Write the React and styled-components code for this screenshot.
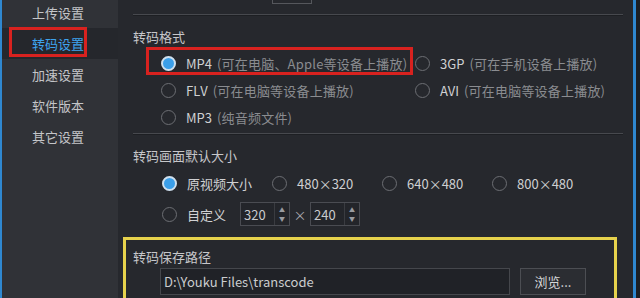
import React from 'react'
import styled, { createGlobalStyle } from 'styled-components'

const Global = createGlobalStyle`
html, body { margin: 0; padding: 0; background: #26282d; }
body { font-family: "Noto Sans CJK SC", "Noto Sans", sans-serif; }
`

const Frame = styled.div`
width: 640px;
height: 298px;
overflow: hidden;
display: flex;
background: #26282d;
`

const Edge = styled.div`
width: ${p => p.w}px;
flex: none;
background: ${p => p.color};
`

const Side = styled.div`
width: 116px;
flex: none;
background: #303237;
display: flex;
flex-direction: column;
margin-top: -3px;
`

const NavItem = styled.div`
position: relative;
height: 31px;
flex: none;
display: flex;
align-items: center;
padding-left: 30px;
font-size: 13px;
color: ${p => (p.active ? '#3ea3ee' : '#c4c5c8')};
background: ${p => (p.active ? '#25272c' : 'transparent')};
${p => p.active && `
&::after{
    content:'';
    position:absolute;
    left:7px; right:31px; top:-1px; bottom:2px;
    border:3px solid #d8221f;
}
`}
`

const Main = styled.div`
flex: 1;
padding: 0 10px 0 15px;
display: flex;
flex-direction: column;
>*{
    flex: none;
}
`

const TopStub = styled.div`
height: 14px;
padding-left: 139px;
`

const StubBox = styled.div`
width: 38px;
height: 3px;
border: 1px solid #55575c;
border-top: none;
`

const Sep = styled.div`
height: 1px;
background: #47494e;
border-bottom: 1px solid #1d1f23;
margin-top: ${p => p.mt || 0}px;
`

const Label = styled.div`
font-size: 13px;
line-height: 20px;
color: #c6c7ca;
margin-top: ${p => p.mt || 0}px;
`

const FormatGrid = styled.div`
display: grid;
grid-template-columns: 254px auto;
grid-auto-rows: 27px;
margin: 3px 0 0 28px;
`

const Option = styled.div`
position: relative;
display: flex;
align-items: center;
font-size: 13px;
color: #d0d1d3;
white-space: nowrap;
${p => p.marked && `
&::after{
    content:'';
    position:absolute;
    left:-15px; right:2px; top:-3px; bottom:2px;
    border:3px solid #d8221f;
}
`}
`

const Radio = styled.span`
width: 15px;
height: 15px;
box-sizing: border-box;
border-radius: 50%;
flex: none;
margin-right: 10px;
border: ${p => (p.on ? '2px solid #cfe0ee' : '1.5px solid #6c6e73')};
background: ${p => (p.on ? '#3b9fe9' : 'transparent')};
`

const Hint = styled.span`
color: #8a8c90;
margin-left: 5px;
letter-spacing: 0.2px;
`

const SizeRow = styled.div`
display: flex;
align-items: center;
height: ${p => p.h}px;
margin: ${p => p.mt}px 0 0 29px;
`

const SizeOption = styled(Option)`
width: 110px;
color: #cfd0d2;
`

const CustomOption = styled(Option)`
width: 78px;
`

const Spin = styled.div`
width: 50px;
height: 24px;
box-sizing: border-box;
border: 1px solid #4a4c52;
background: #23252a;
display: flex;
align-items: center;
font-size: 13px;
color: #cacbce;
padding-left: 3px;
`

const SpinText = styled.span`
flex: 1;
`

const SpinArrows = styled.div`
width: 14px;
height: 100%;
border-left: 1px solid #3a3c41;
display: flex;
flex-direction: column;
align-items: center;
justify-content: center;
gap: 4px;
color: #9a9ca0;
font-size: 6px;
line-height: 5px;
`

const Times = styled.span`
width: 20px;
text-align: center;
color: #a8aaae;
font-size: 13px;
`

const PathBox = styled.div`
height: 80px;
border: 3px solid #e6d24c;
margin: 11px 6px 0 -10px;
padding: 7px 0 0 7px;
`

const PathRow = styled.div`
display: flex;
gap: 10px;
margin: 1px 0 0 27px;
`

const PathInput = styled.div`
width: 350px;
height: 27px;
box-sizing: border-box;
border: 1px solid #45474c;
background: #202227;
display: flex;
align-items: center;
padding-left: 3px;
font-size: 13px;
color: #cbccce;
`

const Browse = styled.div`
width: 66px;
height: 27px;
box-sizing: border-box;
border: 1px solid #4c4e53;
background: #2b2d32;
display: flex;
align-items: center;
justify-content: center;
font-size: 13px;
color: #d5d6d8;
`

const navs = ['上传设置', '转码设置', '加速设置', '软件版本', '其它设置']

const formats = [
    ['MP4', '(可在电脑、Apple等设备上播放)', true],
    ['3GP', '(可在手机设备上播放)'],
    ['FLV', '(可在电脑等设备上播放)'],
    ['AVI', '(可在电脑等设备上播放)'],
    ['MP3', '(纯音频文件)'],
]

const sizes = ['原视频大小', '480×320', '640×480', '800×480']

function SpinBox({value}){
    return(
        <Spin>
            <SpinText>{value}</SpinText>
            <SpinArrows><span>▲</span><span>▼</span></SpinArrows>
        </Spin>
    )
}

export default function App(){
    return(
        <Frame>
            <Global/>
            <Edge w={2} color='#2f88d0'/>
            <Side>
                {navs.map((n, i) => <NavItem key={n} active={i === 1}>{n}</NavItem>)}
            </Side>
            <Main>
                <TopStub><StubBox/></TopStub>
                <Sep/>
                <Label mt={11}>转码格式</Label>
                <FormatGrid>
                    {formats.map(([name, hint, first]) => (
                        <Option key={name} marked={first}>
                            <Radio on={first}/>
                            {name}
                            <Hint>{hint}</Hint>
                        </Option>
                    ))}
                </FormatGrid>
                <Sep mt={2}/>
                <Label mt={11}>转码画面默认大小</Label>
                <SizeRow h={24} mt={5}>
                    {sizes.map((s, i) => (
                        <SizeOption key={s}>
                            <Radio on={i === 0}/>
                            {s}
                        </SizeOption>
                    ))}
                </SizeRow>
                <SizeRow h={24} mt={7}>
                    <CustomOption><Radio/>自定义</CustomOption>
                    <SpinBox value='320'/>
                    <Times>×</Times>
                    <SpinBox value='240'/>
                </SizeRow>
                <PathBox>
                    <Label>转码保存路径</Label>
                    <PathRow>
                        <PathInput>D:\Youku Files\transcode</PathInput>
                        <Browse>浏览...</Browse>
                    </PathRow>
                </PathBox>
            </Main>
            <Edge w={3} color='#2f88d0'/>
            <Edge w={4} color='#1c1f24'/>
        </Frame>
    )
}
